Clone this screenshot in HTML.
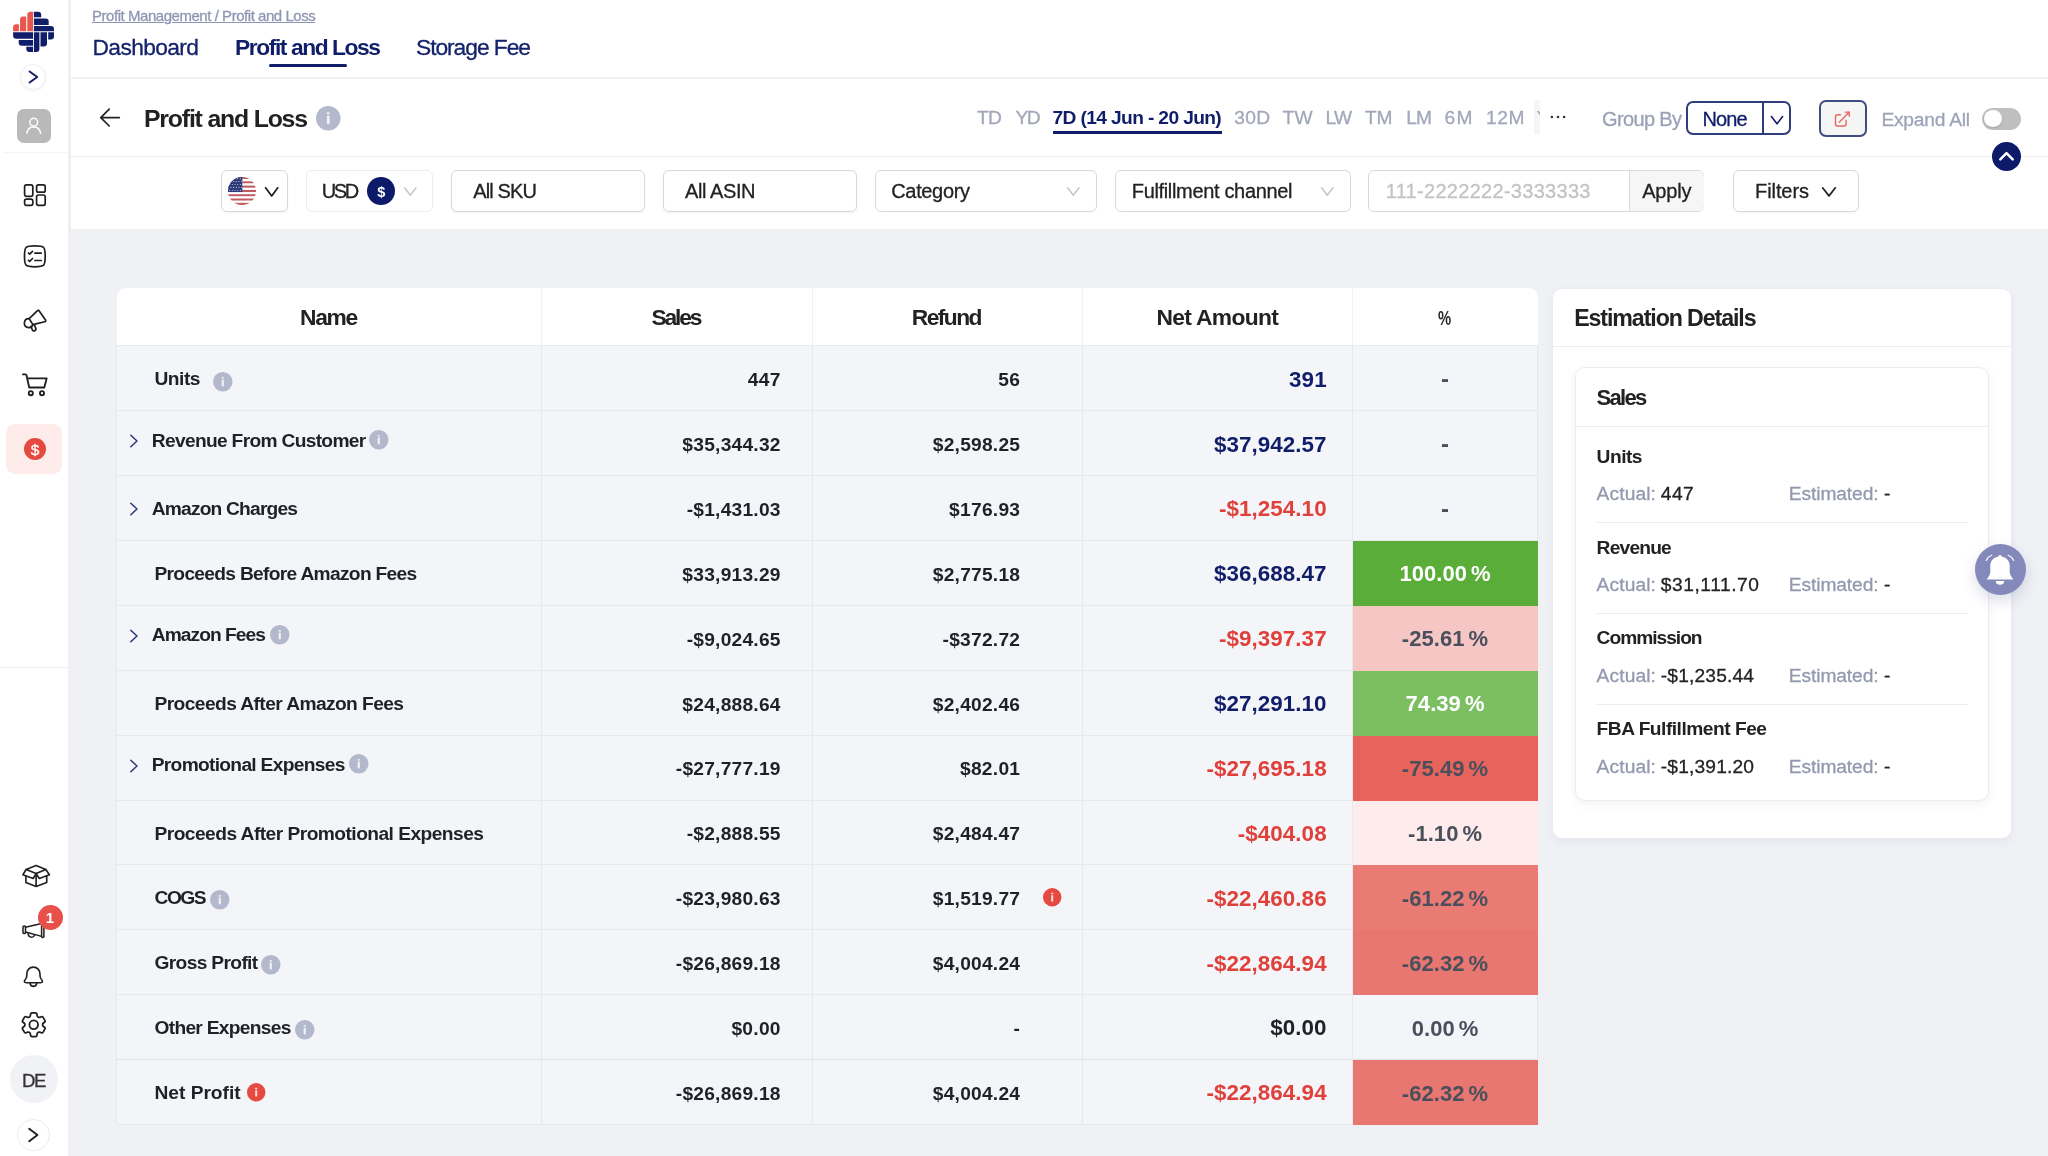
<!DOCTYPE html>
<html lang="en"><head><meta charset="utf-8"><title>Profit and Loss</title>
<style>
html,body{margin:0;padding:0}
body{width:2048px;height:1156px;position:relative;overflow:hidden;background:#f0f1f5;font-family:"Liberation Sans", sans-serif;}
.t{position:absolute;white-space:pre;line-height:1;font-family:"Liberation Sans", sans-serif;}
svg{position:absolute;overflow:visible}
#root{position:absolute;left:0;top:0;width:2048px;height:1156px;will-change:transform}
</style></head><body><div id="root">
<div style="position:absolute;left:70.6px;top:0px;width:1978px;height:77px;background:#fff;"></div>
<div style="position:absolute;left:70.6px;top:77px;width:1978px;height:2px;background:#eef0f4;"></div>
<div style="position:absolute;left:70.6px;top:79px;width:1978px;height:77px;background:#fff;"></div>
<div style="position:absolute;left:70.6px;top:156px;width:1978px;height:1px;background:#ececef;"></div>
<div style="position:absolute;left:70.6px;top:157px;width:1978px;height:71.5px;background:#fff;"></div>
<div style="position:absolute;left:0px;top:0px;width:67.8px;height:1156px;background:#fff;"></div>
<div style="position:absolute;left:67.8px;top:0px;width:2.8px;height:1156px;background:#eef0f4;"></div>
<div style="position:absolute;left:4px;top:152px;width:63px;height:1px;background:#f3f4f6;"></div>
<div style="position:absolute;left:0px;top:666.5px;width:68px;height:1.5px;background:#eef0f3;"></div>
<svg style="left:0;top:0" width="69" height="60" viewBox="0 0 69 60"><path d="M13.1 31.2V27.4a3.2 3.2 0 0 1 3.2-3.2H18.9V31.2Z" fill="#e8564e"/><path d="M20.0 31.2V19.8a3.2 3.2 0 0 1 3.2-3.2H26.2V31.2Z" fill="#e8564e"/><path d="M27.3 31.2V15.0a3.2 3.2 0 0 1 3.2-3.2H33.0V31.2Z" fill="#e8564e"/><path d="M33.9 11.8H38.0a3.2 3.2 0 0 1 3.2 3.2V17.3H33.9Z" fill="#101d69"/><path d="M33.9 18.4H45.5a3.2 3.2 0 0 1 3.2 3.2V24.9H33.9Z" fill="#101d69"/><path d="M33.9 26.0H50.8a3.2 3.2 0 0 1 3.2 3.2V31.2H33.9Z" fill="#101d69"/><path d="M33.9 32.2H39.4V48.699999999999996a3.2 3.2 0 0 1-3.2 3.2H33.9Z" fill="#101d69"/><path d="M40.5 32.2H47.0V43.199999999999996a3.2 3.2 0 0 1-3.2 3.2H40.5Z" fill="#101d69"/><path d="M48.2 32.2H54.0V36.199999999999996a3.2 3.2 0 0 1-3.2 3.2H48.2Z" fill="#101d69"/><path d="M33.0 32.2V38.7H16.3a3.2 3.2 0 0 1-3.2-3.2V32.2Z" fill="#101d69"/><path d="M33.0 39.9V45.7H21.9a3.2 3.2 0 0 1-3.2-3.2V39.9Z" fill="#101d69"/><path d="M33.0 46.8V51.9H29.5a3.2 3.2 0 0 1-3.2-3.2V46.8Z" fill="#101d69"/></svg>
<div style="position:absolute;left:20.2px;top:63.5px;width:26px;height:26px;border-radius:50%;background:#fff;border:1px solid #f0f0f3;box-sizing:border-box;box-shadow:0 1px 3px rgba(0,0,0,.06);"></div>
<svg style="left:20.2px;top:63.5px" width="26" height="26" viewBox="0 0 26 26"><path d="M9.6 7.4 L17.2 13 L9.6 18.6" fill="none" stroke="#101d69" stroke-width="1.9" stroke-linecap="round" stroke-linejoin="round"/></svg>
<div style="position:absolute;left:17.3px;top:109.3px;width:33.6px;height:33.4px;background:#b9b9b9;border-radius:7px;"></div>
<svg style="left:17.3px;top:109.3px" width="33.6" height="33.4" viewBox="0 0 33.6 33.4"><circle cx="16.7" cy="13.2" r="3.9" fill="none" stroke="#fff" stroke-width="1.5"/><path d="M9.8 24.2c.6-4 3.4-6.3 6.9-6.3s6.3 2.3 6.9 6.3" fill="none" stroke="#fff" stroke-width="1.5" stroke-linecap="round"/></svg>
<svg style="left:22px;top:182px" width="26" height="26" viewBox="0 0 26 26" fill="none" stroke="#1f1f1f" stroke-width="1.7"><rect x="2.6" y="2.8" width="8.2" height="11.6" rx="1.8"/><rect x="14.6" y="2.8" width="8.6" height="7.4" rx="1.8"/><rect x="2.6" y="17.2" width="8.2" height="6.2" rx="1.8"/><rect x="14.6" y="13" width="8.6" height="10.4" rx="1.8"/></svg>
<svg style="left:14px;top:236px" width="40" height="40" viewBox="0 0 40 40" fill="none" stroke="#1f1f1f" stroke-width="1.7" stroke-linecap="round" stroke-linejoin="round"><path d="M20.85 9.900000000000002C30.48 9.900000000000002 31.200000000000003 10.63 31.200000000000003 20.35C31.200000000000003 30.07 30.48 30.8 20.85 30.8C11.22 30.8 10.500000000000002 30.07 10.500000000000002 20.35C10.500000000000002 10.63 11.22 9.900000000000002 20.85 9.900000000000002Z"/><path d="M14.500 17l1.200 1.200 2.800-2.800M20.900 17.200h6.300M14.500 24.300l1.200 1 2.800-2.800M20.900 24.500h6.300"/></svg>
<svg style="left:14px;top:300px" width="40" height="40" viewBox="0 0 40 40" fill="none" stroke="#1f1f1f" stroke-width="1.7" stroke-linecap="round" stroke-linejoin="round"><path d="M15.200 18.700L23.200 10.900Q24.500 9.700 25.400 11.200L31.500 20Q32.200 21.300 30.700 21.700L18.900 24.600Z"/><path d="M15.200 18.700A4.400 4.400 0 1 0 18.900 24.600"/><path d="M17 26.600L18.300 29.800A1.930 1.930 0 0 0 21.800 28.200L20.600 25.200"/></svg>
<svg style="left:14px;top:365px" width="40" height="40" viewBox="0 0 40 40" fill="none" stroke="#1f1f1f" stroke-width="1.85" stroke-linecap="round" stroke-linejoin="round"><path d="M8.900 9.300H11.500Q12.300 9.300 12.500 10.200L15.200 22.500H30.300L32.700 13.300H13.300"/><circle cx="16.800" cy="28.200" r="2.050"/><circle cx="28" cy="28.200" r="2.050"/></svg>
<div style="position:absolute;left:5.8px;top:423.9px;width:56.6px;height:50.1px;background:#fdecea;border-radius:9px;"></div>
<div style="position:absolute;left:24px;top:437.9px;width:22.1px;height:22.1px;background:#e5493f;border-radius:50%;"></div>
<svg style="left:14px;top:856px" width="40" height="40" viewBox="0 0 40 40" fill="none" stroke="#1f1f1f" stroke-width="1.65" stroke-linecap="round" stroke-linejoin="round"><path d="M22.100 9.600L31.800 13.500L22.100 17.600L12.100 13.500Z"/><path d="M12.100 13.500L8.900 18.700L19.200 22.500L22.100 17.600L25.300 22.500L35.400 18.700L31.800 13.500"/><path d="M11.900 20V26.600L22.100 30.500L32.700 26.600V20M22.100 17.600V30.500"/></svg>
<svg style="left:14px;top:906px" width="40" height="40" viewBox="0 0 40 40" fill="none" stroke="#1f1f1f" stroke-width="1.5" stroke-linecap="round" stroke-linejoin="round"><rect x="9" y="20.100" width="2.500" height="7.500" rx="1.100"/><path d="M11.500 21.200L27.600 17.600M11.500 26L27.600 30.400"/><rect x="27.600" y="16.200" width="2.300" height="15.400" rx="1"/><path d="M14.100 27.500a3.400 3.900 0 0 0 6.500 1.400"/></svg>
<div style="position:absolute;left:37.9px;top:905px;width:24.8px;height:24.8px;background:#e8504a;border-radius:50%;"></div>
<svg style="left:14px;top:956px" width="40" height="40" viewBox="0 0 40 40" fill="none" stroke="#1f1f1f" stroke-width="1.6" stroke-linecap="round" stroke-linejoin="round"><path d="M19.400 11.100C15.400 11.100 12.800 14.200 12.800 18.200V19.500C12.800 21.600 12.200 22.700 11.100 23.800C9.800 25.200 10.200 26.700 12.200 26.700H26.600C28.600 26.700 29 25.200 27.700 23.800C26.600 22.700 26 21.600 26 19.500V18.200C26 14.200 23.400 11.100 19.400 11.100Z"/><path d="M15.900 27A3.600 4.400 0 0 0 22.900 27"/></svg>
<svg style="left:18.350px;top:1008.950px" width="31.500" height="31.500" viewBox="0 0 24 24" fill="none" stroke="#1f1f1f" stroke-width="1.350" stroke-linecap="round" stroke-linejoin="round"><path d="M9.594 3.94c.09-.542.56-.94 1.11-.94h2.593c.55 0 1.02.398 1.11.94l.213 1.281c.063.374.313.686.645.87.074.04.147.083.22.127.324.196.72.257 1.075.124l1.217-.456a1.125 1.125 0 011.37.49l1.296 2.247a1.125 1.125 0 01-.26 1.431l-1.003.827c-.293.24-.438.613-.431.992a6.759 6.759 0 010 .255c-.007.378.138.75.43.99l1.005.828c.424.35.534.954.26 1.43l-1.298 2.247a1.125 1.125 0 01-1.369.491l-1.217-.456c-.355-.133-.75-.072-1.076.124a6.57 6.570 0 01-.22.128c-.331.183-.581.495-.644.869l-.213 1.280c-.09.543-.56.941-1.11.941h-2.594c-.55 0-1.02-.398-1.11-.94l-.213-1.281c-.062-.374-.312-.686-.644-.87a6.520 6.520 0 01-.22-.127c-.325-.196-.72-.257-1.076-.124l-1.217.456a1.125 1.125 0 01-1.369-.49l-1.297-2.247a1.125 1.125 0 01.26-1.431l1.004-.827c.292-.24.437-.613.43-.992a6.932 6.932 0 010-.255c.007-.378-.138-.75-.43-.99l-1.004-.828a1.125 1.125 0 01-.26-1.430l1.297-2.247a1.125 1.125 0 011.37-.491l1.216.456c.356.133.751.072 1.076-.124.072-.044.146-.087.22-.128.332-.183.582-.495.644-.869l.214-1.281z"/><path d="M15.300 12a3.300 3.300 0 11-6.600 0 3.300 3.300 0 016.600 0z"/></svg>
<div style="position:absolute;left:9.8px;top:1055px;width:48px;height:48px;background:#f1f2f5;border-radius:50%;"></div>
<div style="position:absolute;left:17.3px;top:1118.6px;width:32.3px;height:32.3px;border-radius:50%;background:#fff;border:1px solid #ececef;box-sizing:border-box;"></div>
<svg style="left:17.300px;top:1118.600px" width="32.300" height="32.300" viewBox="0 0 32.3 32.3"><path d="M12.200 9.800 L20.400 16 L12.200 22.200" fill="none" stroke="#222" stroke-width="2" stroke-linecap="round" stroke-linejoin="round"/></svg>
<div style="position:absolute;left:268.75px;top:64.25px;width:78px;height:2.9px;background:#101d69;border-radius:2px;"></div>
<svg style="left:98px;top:106px" width="24" height="24" viewBox="0 0 24 24" fill="none" stroke="#222" stroke-width="1.7" stroke-linecap="round" stroke-linejoin="round"><path d="M21.300 11.600H3.200M11.200 3.200L2.800 11.600l8.400 8.400"/></svg>
<svg style="left:316.00px;top:105.50px" width="24.5" height="24.5" viewBox="0 0 20 20"><circle cx="10" cy="10" r="10" fill="#b3b8cc"/><rect x="8.900" y="7.900" width="2.200" height="6.800" fill="#fff" opacity="0.82"/><rect x="8.900" y="5.200" width="2.200" height="1.600" fill="#fff" opacity="0.82"/></svg>
<div style="position:absolute;left:1052.5px;top:131.2px;width:169.5px;height:2.5px;background:#101d69;"></div>
<div style="position:absolute;left:1534px;top:100px;width:6px;height:34px;overflow:hidden;background:#f6f6f7"><span class="t" style="left:2.500px;top:8.15px;font-size:19.2px;color:#a2a7ba">YTD</span></div>
<svg style="left:1549px;top:113px" width="18" height="8" viewBox="0 0 18 8"><circle cx="2.900" cy="4" r="1.300" fill="#333"/><circle cx="9" cy="4" r="1.300" fill="#333"/><circle cx="15.100" cy="4" r="1.300" fill="#333"/></svg>
<div style="position:absolute;left:1686.25px;top:100.5px;width:105px;height:34.6px;border:2px solid #303d7d;border-radius:7px;box-sizing:border-box;background:#fff;"></div>
<div style="position:absolute;left:1762px;top:101px;width:2px;height:33.6px;background:#303d7d;"></div>
<svg style="left:1768.500px;top:113px" width="16" height="14" viewBox="0 0 16 14"><path d="M2.400 3.600L8 10.800L13.600 3.600" fill="none" stroke="#101d69" stroke-width="1.600" stroke-linecap="round" stroke-linejoin="round"/></svg>
<div style="position:absolute;left:1819.1px;top:100px;width:47.8px;height:37px;border:2px solid #414c80;border-radius:7px;box-sizing:border-box;background:#f5f5f6;"></div>
<svg style="left:1830px;top:108px" width="24" height="24" viewBox="0 0 24 24" fill="none" stroke="#e8685d" stroke-width="1.400" stroke-linecap="round" stroke-linejoin="round"><path d="M10.500 6.800H7.500a2 2 0 0 0-2 2V16a2 2 0 0 0 2 2H14.100a2 2 0 0 0 2-2V12.200"/><path d="M9.300 14.200L19.200 4.100M15.200 4.100H19.200V8.200"/></svg>
<div style="position:absolute;left:1982.3px;top:107.5px;width:39.2px;height:22px;background:#bfbfbf;border-radius:11px;"></div>
<div style="position:absolute;left:1984.4px;top:109.6px;width:17.8px;height:17.8px;background:#fff;border-radius:50%;box-shadow:0 1px 2px rgba(0,0,0,.15);"></div>
<div style="position:absolute;left:1992.2px;top:142.3px;width:29px;height:29px;background:#0c1a69;border-radius:50%;"></div>
<svg style="left:1992.200px;top:142.300px" width="29" height="29" viewBox="0 0 29 29"><path d="M8.300 17.300L14.500 11.100L20.700 17.300" fill="none" stroke="#fff" stroke-width="2.500" stroke-linecap="round" stroke-linejoin="round"/></svg>
<div style="position:absolute;left:220.5px;top:170.4px;width:67.5px;height:41.4px;border:1px solid #d9d9d9;border-radius:6px;box-sizing:border-box;background:#fff;box-shadow:0 1px 2px rgba(0,0,0,.05);"></div>
<svg style="left:228.25px;top:177px" width="28" height="28" viewBox="0 0 28 28"><defs><clipPath id="fc"><circle cx="14" cy="14" r="14"/></clipPath></defs><g clip-path="url(#fc)"><rect x="0" y="0.000" width="28" height="2.204" fill="#bf5a5f"/><rect x="0" y="2.154" width="28" height="2.204" fill="#ffffff"/><rect x="0" y="4.308" width="28" height="2.204" fill="#bf5a5f"/><rect x="0" y="6.462" width="28" height="2.204" fill="#ffffff"/><rect x="0" y="8.615" width="28" height="2.204" fill="#bf5a5f"/><rect x="0" y="10.769" width="28" height="2.204" fill="#ffffff"/><rect x="0" y="12.923" width="28" height="2.204" fill="#bf5a5f"/><rect x="0" y="15.077" width="28" height="2.204" fill="#ffffff"/><rect x="0" y="17.231" width="28" height="2.204" fill="#bf5a5f"/><rect x="0" y="19.385" width="28" height="2.204" fill="#ffffff"/><rect x="0" y="21.538" width="28" height="2.204" fill="#bf5a5f"/><rect x="0" y="23.692" width="28" height="2.204" fill="#ffffff"/><rect x="0" y="25.846" width="28" height="2.204" fill="#bf5a5f"/><rect x="0" y="0" width="14.280000000000001" height="15.077" fill="#2c3a79"/><circle cx="1.60" cy="1.70" r=".6" fill="#fff" opacity=".7"/><circle cx="4.30" cy="1.70" r=".6" fill="#fff" opacity=".7"/><circle cx="7.00" cy="1.70" r=".6" fill="#fff" opacity=".7"/><circle cx="9.70" cy="1.70" r=".6" fill="#fff" opacity=".7"/><circle cx="12.40" cy="1.70" r=".6" fill="#fff" opacity=".7"/><circle cx="2.90" cy="4.60" r=".6" fill="#fff" opacity=".7"/><circle cx="5.60" cy="4.60" r=".6" fill="#fff" opacity=".7"/><circle cx="8.30" cy="4.60" r=".6" fill="#fff" opacity=".7"/><circle cx="11.00" cy="4.60" r=".6" fill="#fff" opacity=".7"/><circle cx="13.70" cy="4.60" r=".6" fill="#fff" opacity=".7"/><circle cx="1.60" cy="7.50" r=".6" fill="#fff" opacity=".7"/><circle cx="4.30" cy="7.50" r=".6" fill="#fff" opacity=".7"/><circle cx="7.00" cy="7.50" r=".6" fill="#fff" opacity=".7"/><circle cx="9.70" cy="7.50" r=".6" fill="#fff" opacity=".7"/><circle cx="12.40" cy="7.50" r=".6" fill="#fff" opacity=".7"/><circle cx="2.90" cy="10.40" r=".6" fill="#fff" opacity=".7"/><circle cx="5.60" cy="10.40" r=".6" fill="#fff" opacity=".7"/><circle cx="8.30" cy="10.40" r=".6" fill="#fff" opacity=".7"/><circle cx="11.00" cy="10.40" r=".6" fill="#fff" opacity=".7"/><circle cx="13.70" cy="10.40" r=".6" fill="#fff" opacity=".7"/><circle cx="1.60" cy="13.30" r=".6" fill="#fff" opacity=".7"/><circle cx="4.30" cy="13.30" r=".6" fill="#fff" opacity=".7"/><circle cx="7.00" cy="13.30" r=".6" fill="#fff" opacity=".7"/><circle cx="9.70" cy="13.30" r=".6" fill="#fff" opacity=".7"/><circle cx="12.40" cy="13.30" r=".6" fill="#fff" opacity=".7"/></g></svg>
<svg style="left:263.00px;top:185.25px" width="17.4" height="13.5" viewBox="0 0 17.4 13.5"><path d="M2.600 2.800L8.7 10.9L14.8 2.800" fill="none" stroke="#1a1a1a" stroke-width="1.7" stroke-linecap="round" stroke-linejoin="round"/></svg>
<div style="position:absolute;left:305.5px;top:170.4px;width:127.5px;height:41.4px;border:1px solid #ececec;border-radius:6px;box-sizing:border-box;background:#fff;"></div>
<div style="position:absolute;left:367.3px;top:176.9px;width:27.8px;height:27.8px;background:#0c1a69;border-radius:50%;"></div>
<svg style="left:401.60px;top:184.55px" width="16.6" height="12.9" viewBox="0 0 16.6 12.9"><path d="M2.600 2.800L8.3 10.3L14.0 2.800" fill="none" stroke="#c4c4c4" stroke-width="1.4" stroke-linecap="round" stroke-linejoin="round"/></svg>
<div style="position:absolute;left:450.75px;top:170.4px;width:193.75px;height:41.4px;border:1px solid #d9d9d9;border-radius:6px;box-sizing:border-box;background:#fff;box-shadow:0 1px 2px rgba(0,0,0,.05);"></div>
<div style="position:absolute;left:662.5px;top:170.4px;width:194.25px;height:41.4px;border:1px solid #d9d9d9;border-radius:6px;box-sizing:border-box;background:#fff;box-shadow:0 1px 2px rgba(0,0,0,.05);"></div>
<div style="position:absolute;left:874.5px;top:170.4px;width:222.25px;height:41.4px;border:1px solid #d9d9d9;border-radius:6px;box-sizing:border-box;background:#fff;"></div>
<svg style="left:1065.20px;top:184.55px" width="16.6" height="12.9" viewBox="0 0 16.6 12.9"><path d="M2.600 2.800L8.3 10.3L14.0 2.800" fill="none" stroke="#c4c4c4" stroke-width="1.4" stroke-linecap="round" stroke-linejoin="round"/></svg>
<div style="position:absolute;left:1114.5px;top:170.4px;width:236.0px;height:41.4px;border:1px solid #d9d9d9;border-radius:6px;box-sizing:border-box;background:#fff;"></div>
<svg style="left:1319.20px;top:184.55px" width="16.6" height="12.9" viewBox="0 0 16.6 12.9"><path d="M2.600 2.800L8.3 10.3L14.0 2.800" fill="none" stroke="#c4c4c4" stroke-width="1.4" stroke-linecap="round" stroke-linejoin="round"/></svg>
<div style="position:absolute;left:1368px;top:170.4px;width:335.70000000000005px;height:41.4px;border:1px solid #d9d9d9;border-radius:6px;box-sizing:border-box;background:#fff;"></div>
<div style="position:absolute;left:1629.1px;top:171.4px;width:73.6px;height:39.4px;background:#f6f6f6;border-left:1px solid #d9d9d9;border-radius:0 6px 6px 0;"></div>
<div style="position:absolute;left:1732.7px;top:170.4px;width:126.79999999999995px;height:41.4px;border:1px solid #d9d9d9;border-radius:6px;box-sizing:border-box;background:#fff;box-shadow:0 1px 2px rgba(0,0,0,.05);"></div>
<svg style="left:1820.00px;top:184.75px" width="18" height="13.5" viewBox="0 0 18 13.5"><path d="M2.600 2.800L9.0 10.9L15.4 2.800" fill="none" stroke="#222" stroke-width="1.7" stroke-linecap="round" stroke-linejoin="round"/></svg>
<div style="position:absolute;left:117px;top:288px;width:1420.6px;height:57.89999999999998px;background:#fff;border-radius:9px 9px 0 0;"></div>
<div style="position:absolute;left:117px;top:345.9px;width:1420.6px;height:778.5600000000001px;background:#f4f5f9;"></div>
<div style="position:absolute;left:117px;top:345.4px;width:1420.6px;height:1px;background:#e6e8ee;"></div>
<div style="position:absolute;left:117px;top:410.28px;width:1420.6px;height:1px;background:#e6e8ee;"></div>
<div style="position:absolute;left:117px;top:475.15999999999997px;width:1420.6px;height:1px;background:#e6e8ee;"></div>
<div style="position:absolute;left:117px;top:540.04px;width:1420.6px;height:1px;background:#e6e8ee;"></div>
<div style="position:absolute;left:117px;top:604.92px;width:1420.6px;height:1px;background:#e6e8ee;"></div>
<div style="position:absolute;left:117px;top:669.8px;width:1420.6px;height:1px;background:#e6e8ee;"></div>
<div style="position:absolute;left:117px;top:734.68px;width:1420.6px;height:1px;background:#e6e8ee;"></div>
<div style="position:absolute;left:117px;top:799.56px;width:1420.6px;height:1px;background:#e6e8ee;"></div>
<div style="position:absolute;left:117px;top:864.4399999999999px;width:1420.6px;height:1px;background:#e6e8ee;"></div>
<div style="position:absolute;left:117px;top:929.3199999999999px;width:1420.6px;height:1px;background:#e6e8ee;"></div>
<div style="position:absolute;left:117px;top:994.1999999999999px;width:1420.6px;height:1px;background:#e6e8ee;"></div>
<div style="position:absolute;left:117px;top:1059.08px;width:1420.6px;height:1px;background:#e6e8ee;"></div>
<div style="position:absolute;left:117px;top:1123.96px;width:1420.6px;height:1px;background:#e6e8ee;"></div>
<div style="position:absolute;left:117px;top:1058.58px;width:1420.6px;height:1.6px;background:#dfe1e7;"></div>
<div style="position:absolute;left:541.25px;top:288px;width:1px;height:57.89999999999998px;background:#eef0f3;"></div>
<div style="position:absolute;left:541.25px;top:345.9px;width:1px;height:778.5600000000001px;background:#e6e8ee;"></div>
<div style="position:absolute;left:812.0px;top:288px;width:1px;height:57.89999999999998px;background:#eef0f3;"></div>
<div style="position:absolute;left:812.0px;top:345.9px;width:1px;height:778.5600000000001px;background:#e6e8ee;"></div>
<div style="position:absolute;left:1082.0px;top:288px;width:1px;height:57.89999999999998px;background:#eef0f3;"></div>
<div style="position:absolute;left:1082.0px;top:345.9px;width:1px;height:778.5600000000001px;background:#e6e8ee;"></div>
<div style="position:absolute;left:1352.1px;top:288px;width:1px;height:57.89999999999998px;background:#eef0f3;"></div>
<div style="position:absolute;left:1352.1px;top:345.9px;width:1px;height:778.5600000000001px;background:#e6e8ee;"></div>
<div style="position:absolute;left:116px;top:345.9px;width:1px;height:778.5600000000001px;background:#e6e8ee;"></div>
<div style="position:absolute;left:1537.1px;top:345.9px;width:1px;height:778.5600000000001px;background:#e6e8ee;"></div>
<div style="position:absolute;left:1352.6px;top:541.04px;width:185.0px;height:64.88px;background:#5aad38;"></div>
<div style="position:absolute;left:1352.6px;top:605.92px;width:185.0px;height:64.88px;background:#f5c6c4;"></div>
<div style="position:absolute;left:1352.6px;top:670.8px;width:185.0px;height:64.88px;background:#7cbf63;"></div>
<div style="position:absolute;left:1352.6px;top:735.68px;width:185.0px;height:64.88px;background:#e7645d;"></div>
<div style="position:absolute;left:1352.6px;top:800.56px;width:185.0px;height:64.88px;background:#fdeceb;"></div>
<div style="position:absolute;left:1352.6px;top:865.4399999999999px;width:185.0px;height:64.88px;background:#e97a74;"></div>
<div style="position:absolute;left:1352.6px;top:930.3199999999999px;width:185.0px;height:64.88px;background:#e97771;"></div>
<div style="position:absolute;left:1352.6px;top:1060.08px;width:185.0px;height:64.88px;background:#e97771;"></div>
<svg style="left:213.25px;top:371.50px" width="19.5" height="19.5" viewBox="0 0 20 20"><circle cx="10" cy="10" r="10" fill="#b3b8cc"/><rect x="8.900" y="7.900" width="2.200" height="6.800" fill="#fff" opacity="0.82"/><rect x="8.900" y="5.200" width="2.200" height="1.600" fill="#fff" opacity="0.82"/></svg>
<svg style="left:127px;top:432.27px" width="14" height="18" viewBox="0 0 14 18"><path d="M3.800 3.200L10 9L3.800 14.800" fill="none" stroke="#2a3776" stroke-width="1.500" stroke-linecap="round" stroke-linejoin="round"/></svg>
<svg style="left:369.25px;top:430.25px" width="19.5" height="19.5" viewBox="0 0 20 20"><circle cx="10" cy="10" r="10" fill="#b3b8cc"/><rect x="8.900" y="7.900" width="2.200" height="6.800" fill="#fff" opacity="0.82"/><rect x="8.900" y="5.200" width="2.200" height="1.600" fill="#fff" opacity="0.82"/></svg>
<svg style="left:127px;top:500.10px" width="14" height="18" viewBox="0 0 14 18"><path d="M3.800 3.200L10 9L3.800 14.800" fill="none" stroke="#2a3776" stroke-width="1.500" stroke-linecap="round" stroke-linejoin="round"/></svg>
<svg style="left:127px;top:626.91px" width="14" height="18" viewBox="0 0 14 18"><path d="M3.800 3.200L10 9L3.800 14.800" fill="none" stroke="#2a3776" stroke-width="1.500" stroke-linecap="round" stroke-linejoin="round"/></svg>
<svg style="left:269.95px;top:624.65px" width="19.5" height="19.5" viewBox="0 0 20 20"><circle cx="10" cy="10" r="10" fill="#b3b8cc"/><rect x="8.900" y="7.900" width="2.200" height="6.800" fill="#fff" opacity="0.82"/><rect x="8.900" y="5.200" width="2.200" height="1.600" fill="#fff" opacity="0.82"/></svg>
<svg style="left:127px;top:756.67px" width="14" height="18" viewBox="0 0 14 18"><path d="M3.800 3.200L10 9L3.800 14.800" fill="none" stroke="#2a3776" stroke-width="1.500" stroke-linecap="round" stroke-linejoin="round"/></svg>
<svg style="left:349.25px;top:754.25px" width="19.5" height="19.5" viewBox="0 0 20 20"><circle cx="10" cy="10" r="10" fill="#b3b8cc"/><rect x="8.900" y="7.900" width="2.200" height="6.800" fill="#fff" opacity="0.82"/><rect x="8.900" y="5.200" width="2.200" height="1.600" fill="#fff" opacity="0.82"/></svg>
<svg style="left:209.75px;top:890.25px" width="19.5" height="19.5" viewBox="0 0 20 20"><circle cx="10" cy="10" r="10" fill="#b3b8cc"/><rect x="8.900" y="7.900" width="2.200" height="6.800" fill="#fff" opacity="0.82"/><rect x="8.900" y="5.200" width="2.200" height="1.600" fill="#fff" opacity="0.82"/></svg>
<svg style="left:261.25px;top:954.75px" width="19.5" height="19.5" viewBox="0 0 20 20"><circle cx="10" cy="10" r="10" fill="#b3b8cc"/><rect x="8.900" y="7.900" width="2.200" height="6.800" fill="#fff" opacity="0.82"/><rect x="8.900" y="5.200" width="2.200" height="1.600" fill="#fff" opacity="0.82"/></svg>
<svg style="left:294.55px;top:1019.95px" width="19.5" height="19.5" viewBox="0 0 20 20"><circle cx="10" cy="10" r="10" fill="#b3b8cc"/><rect x="8.900" y="7.900" width="2.200" height="6.800" fill="#fff" opacity="0.82"/><rect x="8.900" y="5.200" width="2.200" height="1.600" fill="#fff" opacity="0.82"/></svg>
<svg style="left:247.05px;top:1083.40px" width="18.4" height="18.4" viewBox="0 0 20 20"><circle cx="10" cy="10" r="10" fill="#e5493f"/><rect x="8.900" y="7.900" width="2.200" height="6.800" fill="#fff" opacity="0.82"/><rect x="8.900" y="5.200" width="2.200" height="1.600" fill="#fff" opacity="0.82"/></svg>
<svg style="left:1042.80px;top:887.80px" width="18.4" height="18.4" viewBox="0 0 20 20"><circle cx="10" cy="10" r="10" fill="#e5493f"/><rect x="8.900" y="7.900" width="2.200" height="6.800" fill="#fff" opacity="0.82"/><rect x="8.900" y="5.200" width="2.200" height="1.600" fill="#fff" opacity="0.82"/></svg>
<div style="position:absolute;left:1553px;top:288.5px;width:457.5999999999999px;height:549.0px;background:#fff;border-radius:9px;box-shadow:0 3px 10px rgba(140,150,180,.12);"></div>
<div style="position:absolute;left:1553px;top:346px;width:457.5999999999999px;height:1px;background:#ededf0;"></div>
<div style="position:absolute;left:1574.7px;top:367.3px;width:414.3px;height:433.6px;background:#fff;border:1px solid #ececef;border-radius:10px;box-sizing:border-box;box-shadow:0 3px 8px rgba(120,130,160,.10);"></div>
<div style="position:absolute;left:1575.7px;top:426px;width:412.3px;height:1px;background:#ededf0;"></div>
<div style="position:absolute;left:1596.6px;top:522.1px;width:371.4px;height:1px;background:#ececef;"></div>
<div style="position:absolute;left:1596.6px;top:612.95px;width:371.4px;height:1px;background:#ececef;"></div>
<div style="position:absolute;left:1596.6px;top:703.8px;width:371.4px;height:1px;background:#ececef;"></div>
<div style="position:absolute;left:1974.9px;top:543.9px;width:51.6px;height:51.6px;background:#838abb;border-radius:50%;box-shadow:0 6px 14px rgba(90,100,150,.22);"></div>
<svg style="left:1973.800px;top:544px" width="52" height="52" viewBox="0 0 52 52"><path d="M26 12.400C32 12.400 35.700 16.400 35.700 21.800V27.500C35.700 30.500 37.200 32.800 39.400 35.500H12.600C14.800 32.800 16.300 30.500 16.300 27.500V21.800C16.300 16.400 20 12.400 26 12.400Z" fill="#fff"/><circle cx="26" cy="12.700" r="1.700" fill="#fff"/><path d="M21.800 37H30.200A4.200 3.800 0 0 1 21.800 37Z" fill="#fff"/><path d="M12.200 16.400A9.500 9.500 0 0 1 17.700 11.300M39.600 16.400A9.500 9.500 0 0 0 34.100 11.300" fill="none" stroke="#fff" stroke-width="1.200" stroke-linecap="round"/></svg>
<span class="t" style="left:30.69px;top:442px;font-size:15.5px;color:#fff;-webkit-text-stroke:.3px;">$</span>
<span class="t" style="left:45.73px;top:910px;font-size:15px;color:#fff;font-weight:700;">1</span>
<span class="t" style="left:22.10px;top:1072px;font-size:18.6px;color:#333;-webkit-text-stroke:.3px;letter-spacing:-1.544px;">DE</span>
<span class="t" style="left:92.00px;top:8px;font-size:15px;color:#8f96b2;-webkit-text-stroke:.3px;letter-spacing:-0.457px;text-decoration:underline;text-decoration-thickness:1px;text-underline-offset:1px;">Profit Management / Profit and Loss</span>
<span class="t" style="left:92.50px;top:36px;font-size:22.8px;color:#14226b;-webkit-text-stroke:.3px;letter-spacing:-0.629px;">Dashboard</span>
<span class="t" style="left:235.00px;top:36px;font-size:22.8px;color:#101d69;font-weight:700;letter-spacing:-1.424px;">Profit and Loss</span>
<span class="t" style="left:416.00px;top:36px;font-size:22.8px;color:#14226b;-webkit-text-stroke:.3px;letter-spacing:-1.047px;">Storage Fee</span>
<span class="t" style="left:144.00px;top:107px;font-size:24.8px;color:#212121;font-weight:700;letter-spacing:-1.177px;">Profit and Loss</span>
<span class="t" style="left:977.00px;top:108px;font-size:19.2px;color:#a2a7ba;-webkit-text-stroke:.3px;letter-spacing:-0.828px;">TD</span>
<span class="t" style="left:1015.50px;top:108px;font-size:19.2px;color:#a2a7ba;-webkit-text-stroke:.3px;letter-spacing:-1.656px;">YD</span>
<span class="t" style="left:1052.50px;top:108px;font-size:19.2px;color:#101d69;font-weight:700;letter-spacing:-0.632px;">7D (14 Jun - 20 Jun)</span>
<span class="t" style="left:1234.25px;top:108px;font-size:19.2px;color:#a2a7ba;-webkit-text-stroke:.3px;letter-spacing:0.273px;">30D</span>
<span class="t" style="left:1282.50px;top:108px;font-size:19.2px;color:#a2a7ba;-webkit-text-stroke:.3px;letter-spacing:0.156px;">TW</span>
<span class="t" style="left:1325.50px;top:108px;font-size:19.2px;color:#a2a7ba;-webkit-text-stroke:.3px;letter-spacing:-0.859px;">LW</span>
<span class="t" style="left:1365.00px;top:108px;font-size:19.2px;color:#a2a7ba;-webkit-text-stroke:.3px;letter-spacing:-0.219px;">TM</span>
<span class="t" style="left:1406.25px;top:108px;font-size:19.2px;color:#a2a7ba;-webkit-text-stroke:.3px;letter-spacing:-0.906px;">LM</span>
<span class="t" style="left:1444.50px;top:108px;font-size:19.2px;color:#a2a7ba;-webkit-text-stroke:.3px;letter-spacing:1.344px;">6M</span>
<span class="t" style="left:1486.00px;top:108px;font-size:19.2px;color:#a2a7ba;-webkit-text-stroke:.3px;letter-spacing:0.586px;">12M</span>
<span class="t" style="left:1602.00px;top:109px;font-size:20px;color:#9ba1b6;-webkit-text-stroke:.3px;letter-spacing:-0.641px;">Group By</span>
<span class="t" style="left:1702.50px;top:109px;font-size:20px;color:#101d69;-webkit-text-stroke:.3px;letter-spacing:-0.938px;">None</span>
<span class="t" style="left:1881.40px;top:110px;font-size:19.2px;color:#9da3b8;-webkit-text-stroke:.3px;letter-spacing:-0.230px;">Expand All</span>
<span class="t" style="left:321.75px;top:181px;font-size:20px;color:#222;-webkit-text-stroke:.3px;letter-spacing:-2.367px;">USD</span>
<span class="t" style="left:377.26px;top:185px;font-size:14.5px;color:#fff;font-weight:700;">$</span>
<span class="t" style="left:473.25px;top:181px;font-size:20px;color:#222;-webkit-text-stroke:.3px;letter-spacing:-0.859px;">All SKU</span>
<span class="t" style="left:685.00px;top:181px;font-size:20px;color:#222;-webkit-text-stroke:.3px;letter-spacing:-0.408px;">All ASIN</span>
<span class="t" style="left:891.25px;top:181px;font-size:20px;color:#222;-webkit-text-stroke:.3px;letter-spacing:-0.344px;">Category</span>
<span class="t" style="left:1131.75px;top:181px;font-size:20px;color:#222;-webkit-text-stroke:.3px;letter-spacing:-0.333px;">Fulfillment channel</span>
<span class="t" style="left:1385.75px;top:181px;font-size:20px;color:#c3c3c3;-webkit-text-stroke:.3px;letter-spacing:0.294px;">111-2222222-3333333</span>
<span class="t" style="left:1642.20px;top:181px;font-size:20px;color:#222;-webkit-text-stroke:.3px;letter-spacing:-0.183px;">Apply</span>
<span class="t" style="left:1755.00px;top:181px;font-size:20px;color:#222;-webkit-text-stroke:.3px;letter-spacing:-0.076px;">Filters</span>
<span class="t" style="left:300.00px;top:306px;font-size:22.8px;color:#222;font-weight:700;letter-spacing:-1.281px;">Name</span>
<span class="t" style="left:651.50px;top:306px;font-size:22.8px;color:#222;font-weight:700;letter-spacing:-2.145px;">Sales</span>
<span class="t" style="left:911.75px;top:306px;font-size:22.8px;color:#222;font-weight:700;letter-spacing:-1.553px;">Refund</span>
<span class="t" style="left:1156.50px;top:306px;font-size:22.8px;color:#222;font-weight:700;letter-spacing:-0.675px;">Net Amount</span>
<span class="t" style="left:1436.33px;top:309px;font-size:19.5px;color:#2a2a2a;font-weight:700;transform:scaleX(.76);transform-origin:50% 50%;">%</span>
<span class="t" style="left:154.50px;top:369px;font-size:19.2px;color:#1f2128;font-weight:700;letter-spacing:-0.492px;">Units</span>
<span class="t" style="left:747.78px;top:370px;font-size:19.2px;color:#1f2128;font-weight:700;letter-spacing:0.352px;">447</span>
<span class="t" style="left:998.19px;top:370px;font-size:19.2px;color:#1f2128;font-weight:700;letter-spacing:0.470px;">56</span>
<span class="t" style="left:1289.05px;top:369px;font-size:22.4px;color:#101d69;font-weight:700;letter-spacing:0.093px;">391</span>
<span class="t" style="left:1441.00px;top:367px;font-size:24px;color:#4a4f5c;font-weight:700;">-</span>
<span class="t" style="left:151.75px;top:431px;font-size:19.2px;color:#1f2128;font-weight:700;letter-spacing:-0.684px;">Revenue From Customer</span>
<span class="t" style="left:682.36px;top:435px;font-size:19.2px;color:#1f2128;font-weight:700;letter-spacing:0.235px;">$35,344.32</span>
<span class="t" style="left:932.75px;top:435px;font-size:19.2px;color:#1f2128;font-weight:700;letter-spacing:0.235px;">$2,598.25</span>
<span class="t" style="left:1213.96px;top:434px;font-size:22.4px;color:#101d69;font-weight:700;letter-spacing:0.062px;">$37,942.57</span>
<span class="t" style="left:1441.00px;top:432px;font-size:24px;color:#4a4f5c;font-weight:700;">-</span>
<span class="t" style="left:151.75px;top:499px;font-size:19.2px;color:#1f2128;font-weight:700;letter-spacing:-0.806px;">Amazon Charges</span>
<span class="t" style="left:686.73px;top:500px;font-size:19.2px;color:#1f2128;font-weight:700;letter-spacing:0.224px;">-$1,431.03</span>
<span class="t" style="left:949.11px;top:500px;font-size:19.2px;color:#1f2128;font-weight:700;letter-spacing:0.254px;">$176.93</span>
<span class="t" style="left:1218.99px;top:498px;font-size:22.4px;color:#e0403a;font-weight:700;letter-spacing:0.059px;">-$1,254.10</span>
<span class="t" style="left:1441.00px;top:497px;font-size:24px;color:#4a4f5c;font-weight:700;">-</span>
<span class="t" style="left:154.50px;top:564px;font-size:19.2px;color:#1f2128;font-weight:700;letter-spacing:-0.697px;">Proceeds Before Amazon Fees</span>
<span class="t" style="left:682.36px;top:565px;font-size:19.2px;color:#1f2128;font-weight:700;letter-spacing:0.235px;">$33,913.29</span>
<span class="t" style="left:932.75px;top:565px;font-size:19.2px;color:#1f2128;font-weight:700;letter-spacing:0.235px;">$2,775.18</span>
<span class="t" style="left:1213.96px;top:563px;font-size:22.4px;color:#101d69;font-weight:700;letter-spacing:0.062px;">$36,688.47</span>
<span class="t" style="left:1399.39px;top:563px;font-size:22px;color:#fff;font-weight:700;letter-spacing:0.065px;word-spacing:-2.2px;">100.00 %</span>
<span class="t" style="left:151.75px;top:625px;font-size:19.2px;color:#1f2128;font-weight:700;letter-spacing:-0.945px;">Amazon Fees</span>
<span class="t" style="left:686.73px;top:630px;font-size:19.2px;color:#1f2128;font-weight:700;letter-spacing:0.224px;">-$9,024.65</span>
<span class="t" style="left:942.58px;top:630px;font-size:19.2px;color:#1f2128;font-weight:700;letter-spacing:0.238px;">-$372.72</span>
<span class="t" style="left:1218.99px;top:628px;font-size:22.4px;color:#e0403a;font-weight:700;letter-spacing:0.059px;">-$9,397.37</span>
<span class="t" style="left:1401.85px;top:628px;font-size:22px;color:#4a4f5c;font-weight:700;letter-spacing:0.061px;word-spacing:-2.2px;">-25.61 %</span>
<span class="t" style="left:154.50px;top:694px;font-size:19.2px;color:#1f2128;font-weight:700;letter-spacing:-0.584px;">Proceeds After Amazon Fees</span>
<span class="t" style="left:682.36px;top:695px;font-size:19.2px;color:#1f2128;font-weight:700;letter-spacing:0.235px;">$24,888.64</span>
<span class="t" style="left:932.75px;top:695px;font-size:19.2px;color:#1f2128;font-weight:700;letter-spacing:0.235px;">$2,402.46</span>
<span class="t" style="left:1213.96px;top:693px;font-size:22.4px;color:#101d69;font-weight:700;letter-spacing:0.062px;">$27,291.10</span>
<span class="t" style="left:1405.54px;top:693px;font-size:22px;color:#fff;font-weight:700;letter-spacing:0.065px;word-spacing:-2.2px;">74.39 %</span>
<span class="t" style="left:151.75px;top:755px;font-size:19.2px;color:#1f2128;font-weight:700;letter-spacing:-0.700px;">Promotional Expenses</span>
<span class="t" style="left:675.82px;top:759px;font-size:19.2px;color:#1f2128;font-weight:700;letter-spacing:0.225px;">-$27,777.19</span>
<span class="t" style="left:960.02px;top:759px;font-size:19.2px;color:#1f2128;font-weight:700;letter-spacing:0.258px;">$82.01</span>
<span class="t" style="left:1206.47px;top:758px;font-size:22.4px;color:#e0403a;font-weight:700;letter-spacing:0.060px;">-$27,695.18</span>
<span class="t" style="left:1401.85px;top:758px;font-size:22px;color:#4a4f5c;font-weight:700;letter-spacing:0.061px;word-spacing:-2.2px;">-75.49 %</span>
<span class="t" style="left:154.50px;top:824px;font-size:19.2px;color:#1f2128;font-weight:700;letter-spacing:-0.544px;">Proceeds After Promotional Expenses</span>
<span class="t" style="left:686.73px;top:824px;font-size:19.2px;color:#1f2128;font-weight:700;letter-spacing:0.224px;">-$2,888.55</span>
<span class="t" style="left:932.75px;top:824px;font-size:19.2px;color:#1f2128;font-weight:700;letter-spacing:0.235px;">$2,484.47</span>
<span class="t" style="left:1237.75px;top:823px;font-size:22.4px;color:#e0403a;font-weight:700;letter-spacing:0.063px;">-$404.08</span>
<span class="t" style="left:1408.00px;top:823px;font-size:22px;color:#4a4f5c;font-weight:700;letter-spacing:0.061px;word-spacing:-2.2px;">-1.10 %</span>
<span class="t" style="left:154.50px;top:888px;font-size:19.2px;color:#1f2128;font-weight:700;letter-spacing:-1.472px;">COGS</span>
<span class="t" style="left:675.82px;top:889px;font-size:19.2px;color:#1f2128;font-weight:700;letter-spacing:0.225px;">-$23,980.63</span>
<span class="t" style="left:932.75px;top:889px;font-size:19.2px;color:#1f2128;font-weight:700;letter-spacing:0.235px;">$1,519.77</span>
<span class="t" style="left:1206.47px;top:888px;font-size:22.4px;color:#e0403a;font-weight:700;letter-spacing:0.060px;">-$22,460.86</span>
<span class="t" style="left:1401.85px;top:888px;font-size:22px;color:#4a4f5c;font-weight:700;letter-spacing:0.061px;word-spacing:-2.2px;">-61.22 %</span>
<span class="t" style="left:154.50px;top:953px;font-size:19.2px;color:#1f2128;font-weight:700;letter-spacing:-0.654px;">Gross Profit</span>
<span class="t" style="left:675.82px;top:954px;font-size:19.2px;color:#1f2128;font-weight:700;letter-spacing:0.225px;">-$26,869.18</span>
<span class="t" style="left:932.75px;top:954px;font-size:19.2px;color:#1f2128;font-weight:700;letter-spacing:0.235px;">$4,004.24</span>
<span class="t" style="left:1206.47px;top:953px;font-size:22.4px;color:#e0403a;font-weight:700;letter-spacing:0.060px;">-$22,864.94</span>
<span class="t" style="left:1401.85px;top:953px;font-size:22px;color:#4a4f5c;font-weight:700;letter-spacing:0.061px;word-spacing:-2.2px;">-62.32 %</span>
<span class="t" style="left:154.50px;top:1018px;font-size:19.2px;color:#1f2128;font-weight:700;letter-spacing:-0.708px;">Other Expenses</span>
<span class="t" style="left:731.43px;top:1019px;font-size:19.2px;color:#1f2128;font-weight:700;letter-spacing:0.264px;">$0.00</span>
<span class="t" style="left:1013.47px;top:1019px;font-size:19.2px;color:#1f2128;font-weight:700;">-</span>
<span class="t" style="left:1270.27px;top:1017px;font-size:22.4px;color:#1f2128;font-weight:700;letter-spacing:0.070px;">$0.00</span>
<span class="t" style="left:1411.68px;top:1018px;font-size:22px;color:#4a4f5c;font-weight:700;letter-spacing:0.066px;word-spacing:-2.2px;">0.00 %</span>
<span class="t" style="left:154.50px;top:1083px;font-size:19.2px;color:#1f2128;font-weight:700;letter-spacing:-0.027px;">Net Profit</span>
<span class="t" style="left:675.82px;top:1084px;font-size:19.2px;color:#1f2128;font-weight:700;letter-spacing:0.225px;">-$26,869.18</span>
<span class="t" style="left:932.75px;top:1084px;font-size:19.2px;color:#1f2128;font-weight:700;letter-spacing:0.235px;">$4,004.24</span>
<span class="t" style="left:1206.47px;top:1082px;font-size:22.4px;color:#e0403a;font-weight:700;letter-spacing:0.060px;">-$22,864.94</span>
<span class="t" style="left:1401.85px;top:1083px;font-size:22px;color:#4a4f5c;font-weight:700;letter-spacing:0.061px;word-spacing:-2.2px;">-62.32 %</span>
<span class="t" style="left:1574.20px;top:307px;font-size:23.2px;color:#222;font-weight:700;letter-spacing:-1.095px;">Estimation Details</span>
<span class="t" style="left:1596.60px;top:387px;font-size:22px;color:#222;font-weight:700;letter-spacing:-1.725px;">Sales</span>
<span class="t" style="left:1596.60px;top:447px;font-size:19.2px;color:#222;font-weight:700;letter-spacing:-0.517px;">Units</span>
<span class="t" style="left:1596.60px;top:484px;font-size:19.2px;color:#9298ae;-webkit-text-stroke:.3px;letter-spacing:0.105px;">Actual:</span>
<span class="t" style="left:1660.80px;top:484px;font-size:19.2px;color:#222;-webkit-text-stroke:.3px;letter-spacing:0.492px;">447</span>
<span class="t" style="left:1788.80px;top:484px;font-size:19.2px;color:#9298ae;-webkit-text-stroke:.3px;letter-spacing:-0.095px;">Estimated:</span>
<span class="t" style="left:1884.00px;top:484px;font-size:19.2px;color:#222;-webkit-text-stroke:.3px;">-</span>
<span class="t" style="left:1596.60px;top:538px;font-size:19.2px;color:#222;font-weight:700;letter-spacing:-0.797px;">Revenue</span>
<span class="t" style="left:1596.60px;top:575px;font-size:19.2px;color:#9298ae;-webkit-text-stroke:.3px;letter-spacing:0.105px;">Actual:</span>
<span class="t" style="left:1660.80px;top:575px;font-size:19.2px;color:#222;-webkit-text-stroke:.3px;letter-spacing:0.557px;">$31,111.70</span>
<span class="t" style="left:1788.80px;top:575px;font-size:19.2px;color:#9298ae;-webkit-text-stroke:.3px;letter-spacing:-0.095px;">Estimated:</span>
<span class="t" style="left:1884.00px;top:575px;font-size:19.2px;color:#222;-webkit-text-stroke:.3px;">-</span>
<span class="t" style="left:1596.60px;top:628px;font-size:19.2px;color:#222;font-weight:700;letter-spacing:-1.017px;">Commission</span>
<span class="t" style="left:1596.60px;top:666px;font-size:19.2px;color:#9298ae;-webkit-text-stroke:.3px;letter-spacing:0.105px;">Actual:</span>
<span class="t" style="left:1660.80px;top:666px;font-size:19.2px;color:#222;-webkit-text-stroke:.3px;letter-spacing:0.161px;">-$1,235.44</span>
<span class="t" style="left:1788.80px;top:666px;font-size:19.2px;color:#9298ae;-webkit-text-stroke:.3px;letter-spacing:-0.095px;">Estimated:</span>
<span class="t" style="left:1884.00px;top:666px;font-size:19.2px;color:#222;-webkit-text-stroke:.3px;">-</span>
<span class="t" style="left:1596.60px;top:719px;font-size:19.2px;color:#222;font-weight:700;letter-spacing:-0.503px;">FBA Fulfillment Fee</span>
<span class="t" style="left:1596.60px;top:757px;font-size:19.2px;color:#9298ae;-webkit-text-stroke:.3px;letter-spacing:0.105px;">Actual:</span>
<span class="t" style="left:1660.80px;top:757px;font-size:19.2px;color:#222;-webkit-text-stroke:.3px;letter-spacing:0.161px;">-$1,391.20</span>
<span class="t" style="left:1788.80px;top:757px;font-size:19.2px;color:#9298ae;-webkit-text-stroke:.3px;letter-spacing:-0.095px;">Estimated:</span>
<span class="t" style="left:1884.00px;top:757px;font-size:19.2px;color:#222;-webkit-text-stroke:.3px;">-</span>
</div></body></html>
